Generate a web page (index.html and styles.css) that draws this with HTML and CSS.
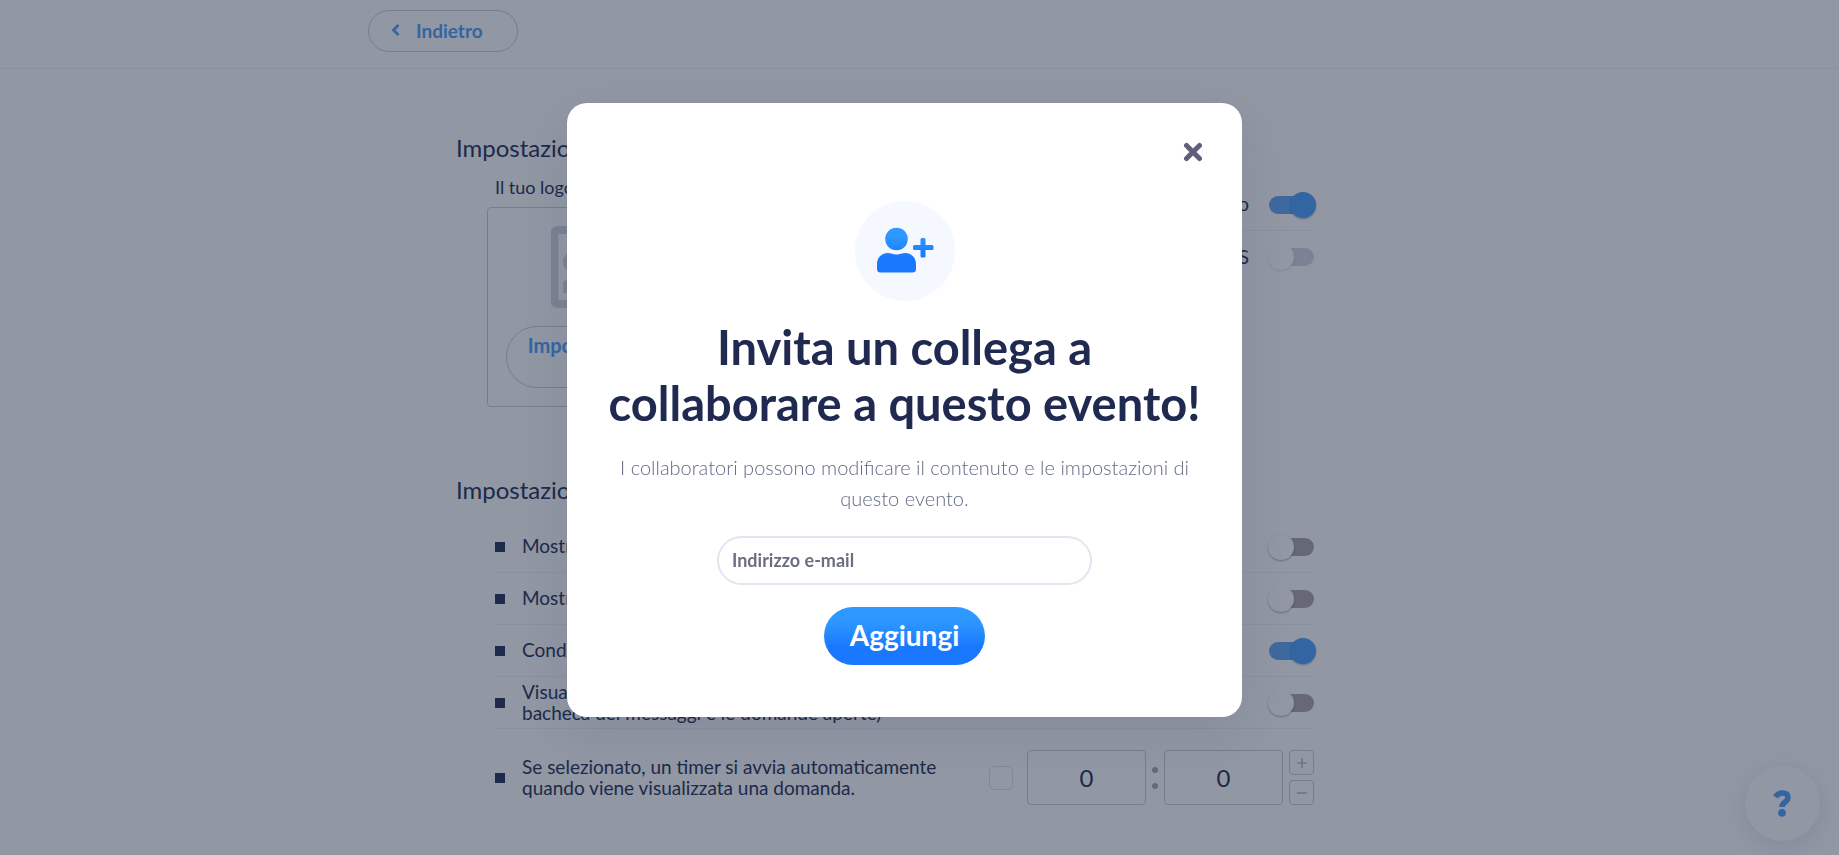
FILE: index.html
```html
<!DOCTYPE html>
<html lang="it">
<head>
<meta charset="utf-8">
<title>Impostazioni evento</title>
<link rel="stylesheet" href="styles.css">
</head>
<body>
<header class="topbar">
  <div class="topbar-inner">
    <button class="back" type="button">
      <svg width="9" height="14" viewBox="0 0 9 14" aria-hidden="true"><path d="M7.500 2 2.500 7l5 5" fill="none" stroke="currentColor" stroke-width="2.800"/></svg>
      Indietro
    </button>
  </div>
</header>

<main class="page">
  <section>
    <h2 class="section-title">Impostazioni</h2>
    <div class="branding">
      <div>
        <p class="logo-label">Il tuo logo</p>
        <div class="logo-box">
          <svg width="109" height="82" viewBox="0 0 109 82" aria-hidden="true"><rect x="3.500" y="4" width="102" height="74" rx="3" fill="none" stroke="#d3d6df" stroke-width="8"/><circle cx="23" cy="36" r="11" fill="#d3d6df"/><path d="M12 67V58q0-4 5-4l12 0L60 24l36 34v9z" fill="#d3d6df"/></svg>
          <button class="upload" type="button">Imposta il tuo<br>logo</button>
        </div>
      </div>
      <div class="options">
        <div class="row"><label class="label-end" for="o1">Logo</label><input class="switch" type="checkbox" id="o1" checked></div>
        <div class="row"><label class="label-end" for="o2">SMS</label><input class="switch pale" type="checkbox" id="o2"></div>
      </div>
    </div>
  </section>

  <section>
    <h2 class="section-title">Impostazioni</h2>
    <div class="list">
      <div class="row"><span class="bullet"></span><label for="s1">Mostra</label><input class="switch" type="checkbox" id="s1"></div>
      <div class="row"><span class="bullet"></span><label for="s2">Mostra</label><input class="switch" type="checkbox" id="s2"></div>
      <div class="row"><span class="bullet"></span><label for="s3">Condividi</label><input class="switch" type="checkbox" id="s3" checked></div>
      <div class="row"><span class="bullet"></span><label for="s4">Visualizza<br>bacheca dei messaggi e le domande aperte)</label><input class="switch" type="checkbox" id="s4"></div>
      <div class="row timer">
        <span class="bullet"></span>
        <label for="s5">Se selezionato, un timer si avvia automaticamente<br>quando viene visualizzata una domanda.</label>
        <input class="check" type="checkbox" id="s5">
        <input class="digits" type="text" value="0" aria-label="Minuti">
        <span class="colon"><i></i><i></i></span>
        <input class="digits" type="text" value="0" aria-label="Secondi">
        <span class="steps">
          <button type="button" aria-label="Aumenta"><svg width="10" height="10" viewBox="0 0 10 10"><path d="M5 0v10M0 5h10" stroke="currentColor" stroke-width="1.200"/></svg></button>
          <button type="button" aria-label="Diminuisci"><svg width="10" height="10" viewBox="0 0 10 10"><path d="M0 5h10" stroke="currentColor" stroke-width="1.200"/></svg></button>
        </span>
      </div>
    </div>
  </section>
</main>

<button class="help" type="button" aria-label="Aiuto">
  <svg width="19" height="27" viewBox="0 0 19 27"><path d="M2.500 7Q5 3 9.500 3 15 3 15 7.600C15 12 9 12 9 17" fill="none" stroke="currentColor" stroke-width="5.600"/><circle cx="9" cy="22.800" r="3.900" fill="currentColor"/></svg>
</button>

<div class="overlay">
  <div class="modal" role="dialog" aria-modal="true" aria-labelledby="title">
    <button class="close" type="button" aria-label="Chiudi">
      <svg width="20" height="20" viewBox="0 0 20 20"><path d="M3.500 3.500l13 13M16.500 3.500l-13 13" stroke="currentColor" stroke-width="5" stroke-linecap="round"/></svg>
    </button>
    <div class="avatar">
      <svg width="58" height="48" viewBox="0 0 58 48" aria-hidden="true">
        <defs><linearGradient id="g" gradientUnits="userSpaceOnUse" x1="0" y1="0" x2="0" y2="46"><stop offset=".2" stop-color="#2d98ff"/><stop offset=".65" stop-color="#1a78ff"/></linearGradient></defs>
        <g fill="url(#g)"><circle cx="20.500" cy="12" r="11.300"/><path d="M12 26c3 0 5 1.500 8.500 1.500S26 26 29 26c6.500 0 11 5 11 11v5q0 3.500-3.500 3.500h-32Q1 45.500 1 42v-5c0-6 4.500-11 11-11z"/><path d="M44.500 12.500q0-1.500 1.500-1.500h2q1.500 0 1.500 1.500V18H56q1.500 0 1.500 1.500v2q0 1.500-1.500 1.500h-6.500v6q0 1.500-1.500 1.500h-2q-1.500 0-1.500-1.500v-6h-6Q37 23 37 21.500v-2q0-1.500 1.500-1.500h6z"/></g>
      </svg>
    </div>
    <h1 class="title" id="title">Invita un collega a collaborare a questo evento!</h1>
    <p class="lead">I collaboratori possono modificare il contenuto e le impostazioni di questo evento.</p>
    <form class="form">
      <input class="email" type="email" placeholder="Indirizzo e-mail" aria-label="Indirizzo e-mail">
      <button class="submit" type="button">Aggiungi</button>
    </form>
  </div>
</div>
</body>
</html>
```
FILE: styles.css
```css
* { box-sizing: border-box; }
html, body { height: 100%; }
body {
  margin: 0;
  overflow: hidden;
  background: #fff;
  color: #20294f;
  font: 19px/21px Lato, "Open Sans", sans-serif;
}
h1, h2, p { margin: 0; }
button, input { font: inherit; color: inherit; margin: 0; }
button { cursor: pointer; padding: 0; border: 0; background: none; }

.topbar { height: 69px; padding: 10px 30px 0 0; border-bottom: 1px solid #f0f1f5; }
.topbar-inner { max-width: 1073px; margin: 0 auto; }
.back {
  display: flex;
  align-items: center;
  gap: 16px;
  width: 150px;
  height: 42px;
  padding: 0 0 2px 22px;
  border: 1px solid #c9ccd6;
  border-radius: 21px;
  color: #489dff;
  font-weight: 700;
}

.page { width: 927px; max-width: 100%; margin: 0 auto; padding: 65px 30px 0 0; }
section + section { margin-top: 69px; }
.section-title { font-size: 24px; line-height: 28px; font-weight: 400; }
.branding { display: flex; justify-content: space-between; padding: 15px 39px 0 31px; }
.logo-label { padding-left: 8px; margin-bottom: 9px; font-size: 18px; }
.logo-box {
  display: flex;
  flex-direction: column;
  align-items: center;
  gap: 18px;
  width: 236px;
  height: 200px;
  padding-top: 18px;
  border: 1px solid #c9ccd6;
  border-radius: 4px;
}
.upload {
  width: 198px;
  height: 62px;
  padding: 0 48px 2px 15px;
  border: 1px solid #c9ccd6;
  border-radius: 31px;
  color: #489dff;
  font-size: 20px;
  font-weight: 700;
}
.options { width: 400px; padding-top: 2px; }

.row {
  display: flex;
  align-items: center;
  height: 52px;
  border-bottom: 1px solid #f0f1f5;
}
.row label { flex: 1; padding-bottom: 2px; }
.row .label-end { text-align: right; padding-right: 20px; }
.options .row:last-child { border-bottom: 0; }
.list { padding: 17px 39px 0; }
.bullet { width: 10px; height: 10px; margin-right: 17px; background: #20294f; }

.switch {
  appearance: none;
  display: flex;
  align-items: center;
  width: 45px;
  height: 18px;
  border-radius: 9px;
  background: #ada3a5;
}
.switch::before {
  content: "";
  width: 26px;
  height: 26px;
  margin-left: -1px;
  flex: none;
  border-radius: 50%;
  background: #fff;
  box-shadow: 0 1px 2px rgba(32, 41, 79, .4);
}
.switch.pale { background: #d3d6df; }
.switch.pale::before { box-shadow: 0 1px 2px rgba(32, 41, 79, .15); }
.switch:checked { background: #5fa5f5; }
.switch:checked::before { margin-left: 21px; background: #489dff; }

.timer { height: 97px; border: 0; }
.check {
  appearance: none;
  width: 24px;
  height: 24px;
  margin-right: 14px;
  border: 1px solid #dfe1e8;
  border-radius: 5px;
}
.digits {
  width: 119px;
  height: 55px;
  border: 1px solid #c9ccd6;
  border-radius: 4px;
  background: none;
  text-align: center;
  font-size: 24px;
}
.colon { display: flex; flex-direction: column; align-items: center; gap: 10px; width: 18px; }
.colon i { width: 6px; height: 6px; border-radius: 50%; background: #ada3a5; }
.steps { display: grid; gap: 5px; margin-left: 6px; }
.steps button {
  display: grid;
  place-items: center;
  width: 25px;
  height: 25px;
  border: 1px solid #c9ccd6;
  border-radius: 4px;
  color: #ada3a5;
}

.help {
  position: fixed;
  right: 19px;
  bottom: 14px;
  display: grid;
  place-items: center;
  width: 75px;
  height: 75px;
  border-radius: 50%;
  background: #fff;
  color: #489dff;
  box-shadow: 0 5px 24px rgba(32, 41, 79, .12);
}

.overlay {
  position: fixed;
  inset: 0;
  display: flex;
  align-items: center;
  justify-content: center;
  padding: 0 30px 35px 0;
  background: rgba(30, 43, 67, .49);
}
.modal {
  display: flex;
  flex-direction: column;
  align-items: center;
  width: 675px;
  max-width: 100%;
  padding: 39px 32px 52px;
  border-radius: 20px;
  background: #fff;
  box-shadow: 0 16px 48px rgba(32, 41, 79, .1);
  text-align: center;
}
.close { align-self: flex-end; width: 20px; height: 20px; margin: 0 7px 39px 0; color: #5d6078; }
.close svg { display: block; }
.avatar {
  display: grid;
  place-items: center;
  width: 100px;
  height: 100px;
  border-radius: 50%;
  background: #f5f8ff;
}
.title { margin-top: 18px; font-size: 47px; line-height: 56px; font-weight: 700; }
.lead { margin: 21px 0 22px; color: #626a84; font-size: 20px; line-height: 31px; font-weight: 300; }
.form { display: flex; flex-direction: column; align-items: center; gap: 22px; }
.email {
  width: 375px;
  max-width: 100%;
  height: 49px;
  padding: 0 13px 2px;
  border: 2px solid #e1e6f0;
  border-radius: 25px;
  background: #fff;
  font-size: 18px;
  font-weight: 700;
}
.email::placeholder { color: #6b6e80; opacity: 1; }
.submit {
  width: 161px;
  height: 58px;
  padding-bottom: 2px;
  border-radius: 29px;
  background: linear-gradient(#2d98ff 25%, #1a78ff 70%);
  color: #fff;
  font-size: 28px;
  font-weight: 700;
}
```
